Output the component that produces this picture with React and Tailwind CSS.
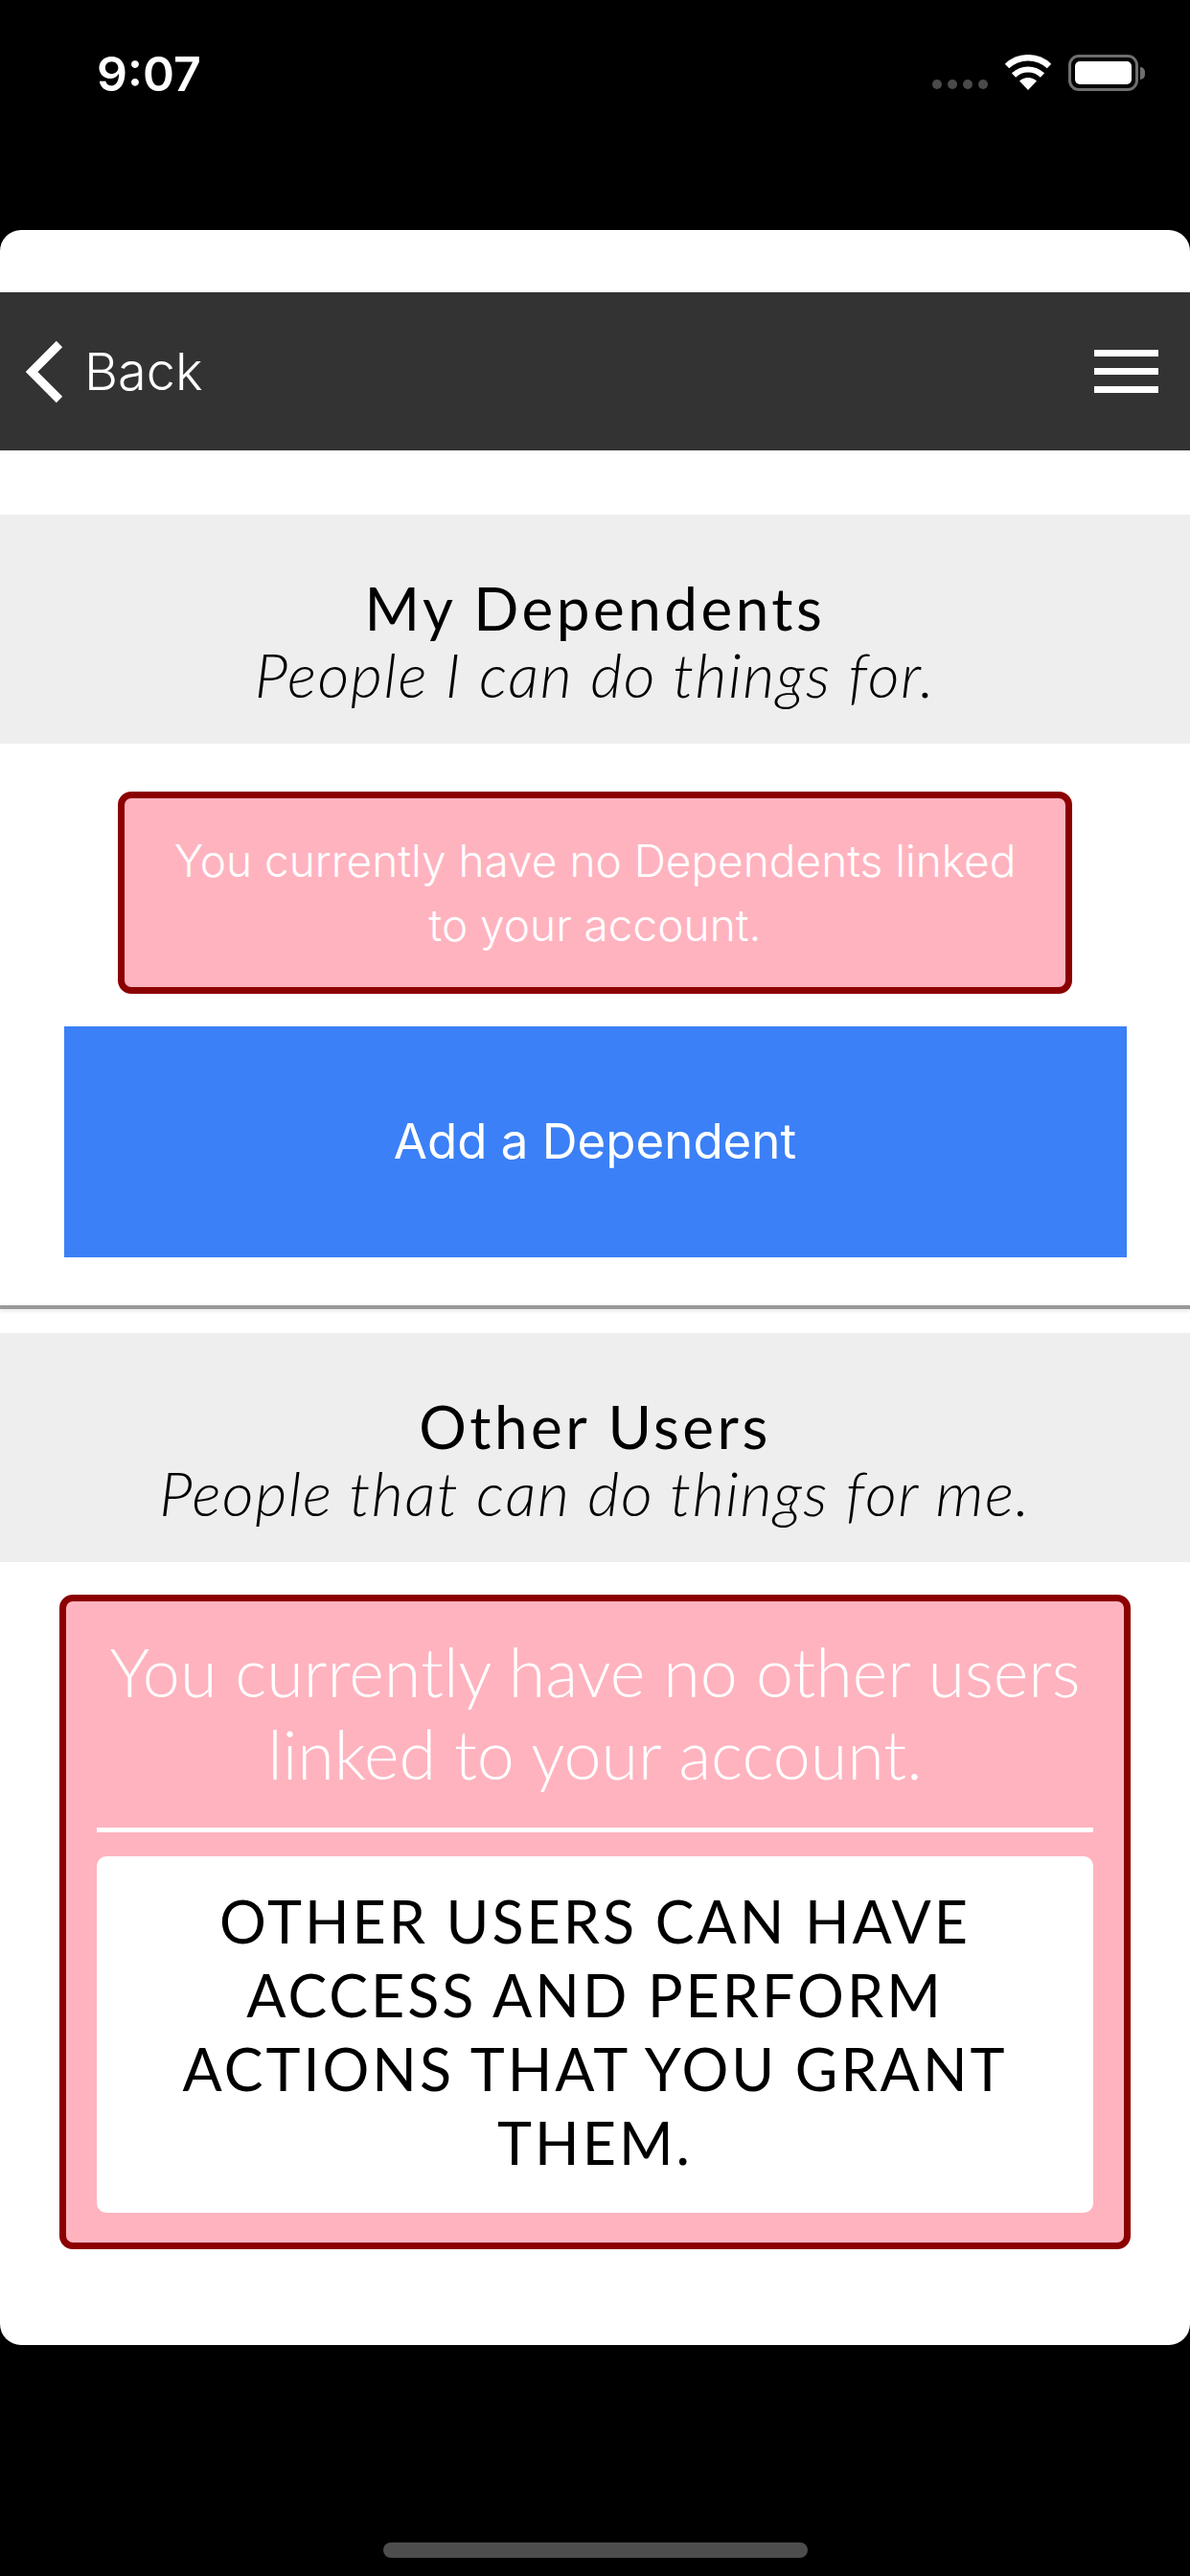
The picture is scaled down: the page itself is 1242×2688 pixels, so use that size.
import React from "react";

const raleway = "font-['Lato','Open_Sans',sans-serif]";
const sfText = "font-['Inter','Liberation_Sans',sans-serif]";

const SectionHeader = ({ title, subtitle }) => (
  <div className={`h-[239px] bg-[#eeeeee] flex flex-col items-center pt-[62px] text-black ${raleway}`}>
    <div className="text-[62px] leading-[70px] font-normal tracking-[3.5px]">{title}</div>
    <div className="text-[64px] leading-[70px] italic font-light tracking-[1.6px]">{subtitle}</div>
  </div>
);

const StatusBar = () => (
  <div className="h-[240px] flex items-start justify-between pl-[101px] pr-[47px] pt-[47px] text-white">
    <div className={`text-[50px] leading-[60px] font-semibold ${sfText}`}>9:07</div>
    <div className="flex items-start mt-[10px]">
      <div className="flex gap-[6px] mt-[26px] mr-[17px]">
        <span className="w-[10px] h-[10px] rounded-full bg-[#4a4a4a]" />
        <span className="w-[10px] h-[10px] rounded-full bg-[#4a4a4a]" />
        <span className="w-[10px] h-[10px] rounded-full bg-[#4a4a4a]" />
        <span className="w-[10px] h-[10px] rounded-full bg-[#4a4a4a]" />
      </div>
      <svg width="50" height="38" viewBox="0 0 50 38" className="mr-[17px]">
        <path d="M25 37 L16 27.5 A13 13 0 0 1 34 27.5 Z" fill="#fff" />
        <path d="M10 21.5 A21.5 21.5 0 0 1 40 21.5" fill="none" stroke="#fff" strokeWidth="6" />
        <path d="M3 12 A32 32 0 0 1 47 12" fill="none" stroke="#fff" strokeWidth="6.5" />
      </svg>
      <div className="w-[73px] h-[38px] rounded-[11px] border-[3px] border-[#6e6e6e] p-[4px]">
        <div className="w-full h-full rounded-[5px] bg-white" />
      </div>
      <div className="w-[5px] h-[13px] mt-[13px] ml-[2px] rounded-r-full bg-[#6e6e6e]" />
    </div>
  </div>
);

const NavBar = () => (
  <div className="h-[165px] bg-[#333333] flex items-center justify-between pl-[27px] pr-[33px] text-white">
    <div className="flex items-center">
      <svg width="40" height="66" viewBox="0 0 40 66">
        <path d="M35 4 L6 33 L35 62" fill="none" stroke="#fff" strokeWidth="9" />
      </svg>
      <span className={`ml-[21px] text-[54px] leading-none font-light ${sfText}`}>Back</span>
    </div>
    <div className="flex flex-col gap-[12px]">
      <div className="w-[67px] h-[7px] bg-white" />
      <div className="w-[67px] h-[7px] bg-white" />
      <div className="w-[67px] h-[7px] bg-white" />
    </div>
  </div>
);

const App = () => {
  return (
    <div className="w-[1242px] h-[2688px] bg-black flex flex-col overflow-hidden">
      <StatusBar />
      <div className="h-[2207px] bg-white rounded-[22px] pt-[65px]">
        <NavBar />
        <div className="h-[67px]" />
        <SectionHeader title="My Dependents" subtitle="People I can do things for." />
        <div className="pt-[50px] flex flex-col items-center">
          <div className={`w-[996px] h-[211px] rounded-[14px] border-[7px] border-[#8b0000] bg-[#ffb3bf] flex items-center justify-center text-center text-white text-[46px] leading-[67px] font-light px-[50px] ${sfText}`}>
            You currently have no Dependents linked to your account.
          </div>
          <button className={`w-[1109px] h-[241px] mt-[34px] bg-[#3b80f6] text-white text-[51px] font-normal ${sfText}`}>
            Add a Dependent
          </button>
        </div>
        <div className="h-[4px] mt-[50px] bg-[#999999] shadow-[0_3px_3px_#eeeeee]" />
        <div className="h-[25px]" />
        <SectionHeader title="Other Users" subtitle="People that can do things for me." />
        <div className="pt-[34px] flex flex-col items-center">
          <div className={`w-[1118px] h-[683px] rounded-[14px] border-[7px] border-[#8b0000] bg-[#ffb3bf] px-[32px] pt-[30px] ${raleway}`}>
            <div className="text-center text-white text-[70px] leading-[86px] font-light">
              You currently have no other users linked to your account.
            </div>
            <div className="h-[5px] mt-[34px] bg-white" />
            <div className="h-[372px] mt-[25px] pb-[6px] rounded-[10px] bg-white flex items-center justify-center text-center text-black text-[61px] leading-[77px] tracking-[3px] uppercase px-[60px]">
              Other users can have access and perform actions that you grant them.
            </div>
          </div>
        </div>
      </div>
      <div className="flex-1 flex justify-center items-end pb-[19px]">
        <div className="w-[443px] h-[16px] rounded-full bg-[#4d4d4d]" />
      </div>
    </div>
  );
};

export default App;
